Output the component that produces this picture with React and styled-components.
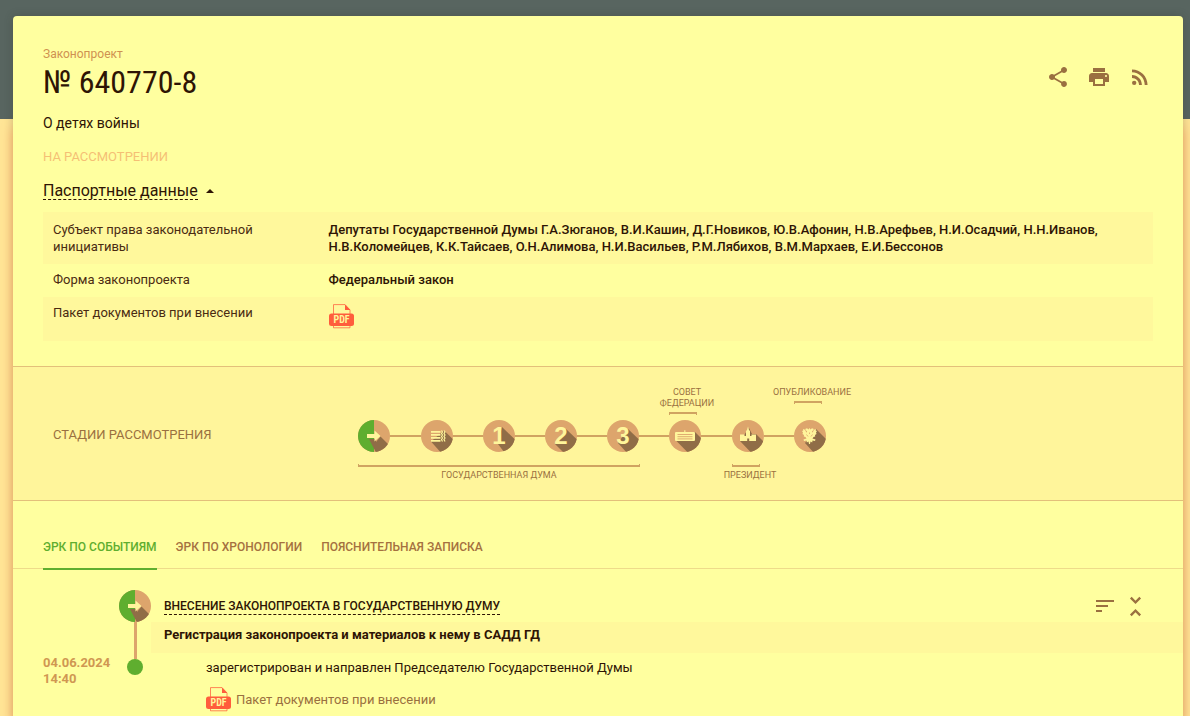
import React from "react";
import styled, { createGlobalStyle } from "styled-components";
import { MdShare, MdPrint, MdRssFeed, MdSort, MdUnfoldLess } from "react-icons/md";

const c = {
  card: "#ffff9f",
  band: "#fff59b",
  stripe: "#fff89c",
  ink: "#2e1404",
  brown: "#9a7040",
  tan: "#dda56c",
  line: "#d0a361",
  shade: "#906d47",
  green: "#5fae2f",
  cream: "#fff59b",
  red: "#ff5d3c",
};

const GlobalStyle = createGlobalStyle`
  *, *::before, *::after { box-sizing: border-box; }
  body { margin: 0; font-family: Roboto, "Open Sans", sans-serif; color: ${c.ink}; }
  h1, h2, h3, p { margin: 0; font-weight: 400; }
  button { padding: 0; border: 0; background: none; font: inherit; color: inherit; cursor: pointer; text-align: left; }
  a { color: inherit; text-decoration: none; }
  svg { display: block; }
`;

const Page = styled.div`
  min-height: 100vh;
  padding: 16px 7px 0 13px;
  overflow: hidden;
  background: linear-gradient(#586560 119px, #ffe596 119px);
`;

const Card = styled.main`
  min-height: calc(100vh - 16px);
  border-radius: 4px 4px 0 0;
  background: ${c.card};
  box-shadow: 0 112px 12px rgba(255, 140, 80, 0.6), 0 0 8px rgba(50, 50, 30, 0.25);
`;

const Header = styled.header`
  display: flex;
  justify-content: space-between;
  align-items: flex-start;
  padding: 28px 30px 25px;
  flex-wrap: wrap;
`;

const Kicker = styled.p`
  font-size: 12px;
  line-height: 20px;
  color: #cf9150;
`;

const BillNumber = styled.h1`
  font-family: "Roboto Condensed", Roboto, sans-serif;
  font-size: 32px;
  line-height: 36px;
`;

const BillTitle = styled.p`
  margin-top: 13px;
  font-size: 14px;
  line-height: 20px;
`;

const Status = styled.p`
  margin-top: 14px;
  font-size: 13px;
  line-height: 20px;
  text-transform: uppercase;
  color: #f5bf75;
`;

const Actions = styled.div`
  display: flex;
  align-items: center;
  gap: ${(p) => p.$gap}px;
  color: ${c.brown};
  ${Header} > & { padding: 21px 1px 0 0; }
`;

const PassportToggle = styled.button`
  display: flex;
  align-items: center;
  gap: 8px;
  margin-top: 15px;
  font-size: 16px;
  line-height: 17px;
  &::after {
    content: "";
    border: 4px solid transparent;
    border-top: 0;
    border-bottom-color: ${c.ink};
  }
`;

const Dashed = styled.span`
  border-bottom: 1px dashed ${c.ink};
`;

const Passport = styled.table`
  flex-basis: 100%;
  width: 100%;
  margin-top: 12px;
  border-collapse: collapse;
  font-size: 13px;
  line-height: 17px;
  tr:nth-child(odd) { background: ${c.stripe}; }
  th, td { padding: 9px 10px; text-align: left; vertical-align: top; }
  th { width: 25%; padding-right: 30px; font-weight: 400; color: #4a2b12; }
  td { padding-left: 8px; font-weight: 500; }
  tr:nth-child(2) > * { padding-top: 7px; }
  tr:nth-child(3) > * { padding-top: 7px; padding-bottom: 12px; }
`;

const Stages = styled.section`
  display: grid;
  grid-template-columns: 305px auto;
  justify-content: start;
  align-items: center;
  padding: 20px 40px 19px;
  border: 1px solid #e3c07a;
  border-width: 1px 0;
  background: ${c.band};
`;

const StagesTitle = styled.h2`
  padding-top: 2px;
  font-size: 13px;
  line-height: 20px;
  text-transform: uppercase;
  color: ${c.brown};
`;

const Track = styled.div`
  display: grid;
  grid-template-columns: 63px 62px 62px 62px 62px 63px 62px 32px;
  grid-template-rows: 33px 32px 29px;
`;

const Step = styled.div`
  grid-row: 2;
  display: flex;
  align-items: center;
  &:not(:last-of-type)::after {
    content: "";
    flex: 1;
    height: 2px;
    background: ${c.line};
  }
`;

const Group = styled.p`
  grid-row: ${(p) => (p.$above ? 1 : 3)};
  grid-column: ${(p) => p.$from} / span ${(p) => p.$span};
  display: flex;
  flex-direction: ${(p) => (p.$above ? "column" : "column-reverse")};
  justify-content: ${(p) => (p.$above ? "flex-start" : "flex-end")};
  align-items: center;
  gap: 3px;
  width: ${(p) => (p.$span > 1 ? "282px" : "28px")};
  padding-top: ${(p) => (p.$above ? 0 : 12)}px;
  font-size: 9px;
  line-height: 11px;
  text-align: center;
  text-transform: uppercase;
  white-space: pre;
  color: ${c.brown};
  &::after {
    content: "";
    width: 100%;
    height: 3px;
    border: 1px solid ${c.line};
    border-width: ${(p) => (p.$above ? "2px 1px 0" : "0 1px 2px")};
  }
  span { padding-left: ${(p) => (p.$span > 1 ? 0 : 8)}px; }
`;

const Tabs = styled.nav`
  display: flex;
  gap: 19px;
  padding: 35px 30px 0;
  border-bottom: 1px solid #eedb8a;
`;

const Tab = styled.button`
  height: 34px;
  margin-bottom: -2px;
  padding-bottom: 11px;
  border-bottom: 2px solid ${(p) => (p.$active ? c.green : "transparent")};
  font-size: 12px;
  line-height: 20px;
  font-weight: 500;
  text-transform: uppercase;
  color: ${(p) => (p.$active ? c.green : "#a5713f")};
`;

const Event = styled.section`
  display: grid;
  grid-template-columns: 76px 32px 1fr;
  padding: 21px 0 4px 30px;
`;

const EventDate = styled.time`
  padding-top: 65px;
  font-size: 13px;
  line-height: 16px;
  font-weight: 700;
  color: #d09752;
`;

const Timeline = styled.div`
  display: flex;
  flex-direction: column;
  align-items: center;
`;

const Stem = styled.span`
  width: 3px;
  height: 37px;
  background: ${c.tan};
`;

const Dot = styled.span`
  width: 16px;
  height: 16px;
  border-radius: 50%;
  background: ${c.green};
`;

const EventHead = styled.div`
  display: flex;
  justify-content: space-between;
  align-items: center;
  height: 32px;
  padding: 0 33px 0 13px;
`;

const EventTitle = styled.button`
  border-bottom: 1px dashed ${c.ink};
  font-size: 12px;
  line-height: 16px;
  font-weight: 500;
  text-transform: uppercase;
`;

const EventStep = styled.h3`
  padding: 3px 13px 8px;
  background: ${c.stripe};
  font-size: 13px;
  line-height: 20px;
  font-weight: 700;
`;

const EventResult = styled.p`
  padding: 5px 33px 9px 55px;
  font-size: 13px;
  line-height: 20px;
`;

const FileLink = styled.a`
  display: inline-flex;
  align-items: center;
  gap: 5px;
  margin-left: 55px;
  font-size: 13px;
  line-height: 20px;
  color: ${c.brown};
`;

const PdfIcon = () => (
  <svg width="25" height="25" viewBox="0 0 25 25" role="img" aria-label="PDF">
    <path d="M4.5 10V.6H16L21 6v4M4.5 20v3.8H21V20" fill="none" stroke={c.red} strokeWidth="1" opacity=".75" />
    <path d="M16 .4 21.4 6H16z" fill={c.red} />
    <rect y="9.5" width="25" height="12.5" rx="2.5" fill={c.red} />
    <text x="12.5" y="19.3" textAnchor="middle" fontSize="10" fontWeight="700" fontFamily="Roboto Condensed, Roboto, sans-serif" fill={c.cream}>PDF</text>
  </svg>
);

const glyphs = {
  start: {
    shadow: "M11 19h7v3l4.500-5.500L40 34 24 44z",
    body: <path d="M9 14h7.500v-3.500L22.500 16l-6 5.500V18H9z" />,
  },
  papers: {
    shadow: "M10 21.500 23 10.500 44 31 30 44z",
    body: (
      <g>
        <path d="M10 11h9.500v1.800H10zM10 14h9.500v1.800H10zM10 17h9.500v1.800H10zM10 20h9.500v1.800H10z" />
        <path d="M20.500 10.500l1 1.500-1 1.500 1 1.500-1 1.500 1 1.500-1 1.500 1 2M23 10.500l1 1.500-1 1.500 1 1.500-1 1.500 1 1.500-1 1.500 1 2" fill="none" stroke={c.cream} strokeWidth="1.200" />
      </g>
    ),
  },
  one: { shadow: "M15 24 19 7 44 31 30 44z", digit: "1" },
  two: { shadow: "M10 24 21 9 44 31 30 44z", digit: "2" },
  three: { shadow: "M11 23 21 9 44 31 30 44z", digit: "3" },
  council: {
    shadow: "M7 20.500 26 12 44 30 30 44z",
    body: (
      <g>
        <path d="M15.200 12v-1.700h1.200V12h8.600q1 0 1 1v7q0 1-1 1H7q-1 0-1-1v-7q0-1 1-1z" />
        <path d="M8.500 14.500h15M8.500 16.700h15M8.500 18.900h15" stroke={c.tan} strokeWidth=".9" />
      </g>
    ),
  },
  kremlin: {
    shadow: "M8 21 17 8 20 14 24 14 44 34 30 44z",
    body: (
      <path d="M8 21v-6.500h4.500V16h1.500v-5l1-1 1-3.500 1 3.500 1 1v5h1.500v-1.500H24V21h-6.800v-2.500h-2V21z" />
    ),
  },
  eagle: {
    shadow: "M11 23 22 9 44 31 30 44z",
    body: (
      <g>
        <path d="M15.500 8l1 1.500 1.500-1.300 1.800.8-.8 1.500-1 .8.500 1.500 1.500-3 2-.8-.3 1.500 1.300.5-1 1.500.5 1.500-1.500 1 .2 1.500-1.700.5-1 1.500 3 1-.5 1.500-2.500-.5-.3 2-1.700-1-.5 2.500h-1l-.5-2.500-1.700 1-.3-2-2.500.5-.5-1.500 3-1-1-1.500-1.700-.5.2-1.500-1.500-1 .5-1.500-1-1.500 1.300-.5-.3-1.500 2 .8 1.500 3 .5-1.500-1-.8-.8-1.500 1.800-.8L14.500 9.500z" />
        <path d="M12.500 14.500l1.500 2M18.500 14.500l-1.500 2M15.500 12.500v1.500" stroke={c.tan} strokeWidth=".8" />
      </g>
    ),
  },
};

const StageIcon = ({ kind, started, id }) => {
  const g = glyphs[kind];
  return (
    <svg width="32" height="32" viewBox="0 0 32 32" aria-hidden="true">
      <clipPath id={id}><circle cx="16" cy="16" r="16" /></clipPath>
      <g clipPath={`url(#${id})`}>
        <rect width="32" height="32" fill={c.tan} />
        {started && <rect width="16" height="32" fill={c.green} />}
        <path d={g.shadow} fill={c.shade} />
      </g>
      <g fill={c.cream}>
        {g.body}
        {g.digit && (
          <text x="16" y="24" textAnchor="middle" fontSize="24" fontWeight="700" fontFamily="Liberation Sans, sans-serif">{g.digit}</text>
        )}
      </g>
    </svg>
  );
};

const tabs = ["ЭРК по событиям", "ЭРК по хронологии", "Пояснительная записка"];

export default function App() {
  return (
    <Page>
      <GlobalStyle />
      <Card>
        <Header>
          <div>
            <Kicker>Законопроект</Kicker>
            <BillNumber>№ 640770-8</BillNumber>
            <BillTitle>О детях войны</BillTitle>
            <Status>На рассмотрении</Status>
            <PassportToggle aria-expanded="true"><Dashed>Паспортные данные</Dashed></PassportToggle>
          </div>
          <Actions $gap={17}>
            <button aria-label="Поделиться"><MdShare size={24} /></button>
            <button aria-label="Печать"><MdPrint size={24} /></button>
            <button aria-label="RSS"><MdRssFeed size={24} /></button>
          </Actions>
          <Passport>
            <tbody>
              <tr>
                <th scope="row">Субъект права законодательной инициативы</th>
                <td>Депутаты Государственной Думы Г.А.Зюганов, В.И.Кашин, Д.Г.Новиков, Ю.В.Афонин, Н.В.Арефьев, Н.И.Осадчий, Н.Н.Иванов, Н.В.Коломейцев, К.К.Тайсаев, О.Н.Алимова, Н.И.Васильев, Р.М.Лябихов, В.М.Мархаев, Е.И.Бессонов</td>
              </tr>
              <tr>
                <th scope="row">Форма законопроекта</th>
                <td>Федеральный закон</td>
              </tr>
              <tr>
                <th scope="row">Пакет документов при внесении</th>
                <td><a href="#package"><PdfIcon /></a></td>
              </tr>
            </tbody>
          </Passport>
        </Header>

        <Stages>
          <StagesTitle>Стадии рассмотрения</StagesTitle>
          <Track>
            <Group $above $from={6} $span={1}><span>{"Совет\nФедерации"}</span></Group>
            <Group $above $from={8} $span={1}><span>Опубликование</span></Group>
            {Object.keys(glyphs).map((kind, i) => (
              <Step key={kind}><StageIcon kind={kind} started={i === 0} id={`stage-${kind}`} /></Step>
            ))}
            <Group $from={1} $span={5}><span>Государственная Дума</span></Group>
            <Group $from={7} $span={1}><span>Президент</span></Group>
          </Track>
        </Stages>

        <Tabs>
          {tabs.map((t, i) => <Tab key={t} $active={i === 0}>{t}</Tab>)}
        </Tabs>

        <Event>
          <EventDate dateTime="2024-06-04T14:40">04.06.2024<br />14:40</EventDate>
          <Timeline>
            <StageIcon kind="start" started id="event-start" />
            <Stem />
            <Dot />
          </Timeline>
          <div>
            <EventHead>
              <EventTitle>Внесение законопроекта в Государственную Думу</EventTitle>
              <Actions $gap={4}>
                <button aria-label="Сортировать"><MdSort size={24} /></button>
                <button aria-label="Свернуть"><MdUnfoldLess size={29} /></button>
              </Actions>
            </EventHead>
            <EventStep>Регистрация законопроекта и материалов к нему в САДД ГД</EventStep>
            <EventResult>зарегистрирован и направлен Председателю Государственной Думы</EventResult>
            <FileLink href="#package"><PdfIcon />Пакет документов при внесении</FileLink>
          </div>
        </Event>
      </Card>
    </Page>
  );
}
